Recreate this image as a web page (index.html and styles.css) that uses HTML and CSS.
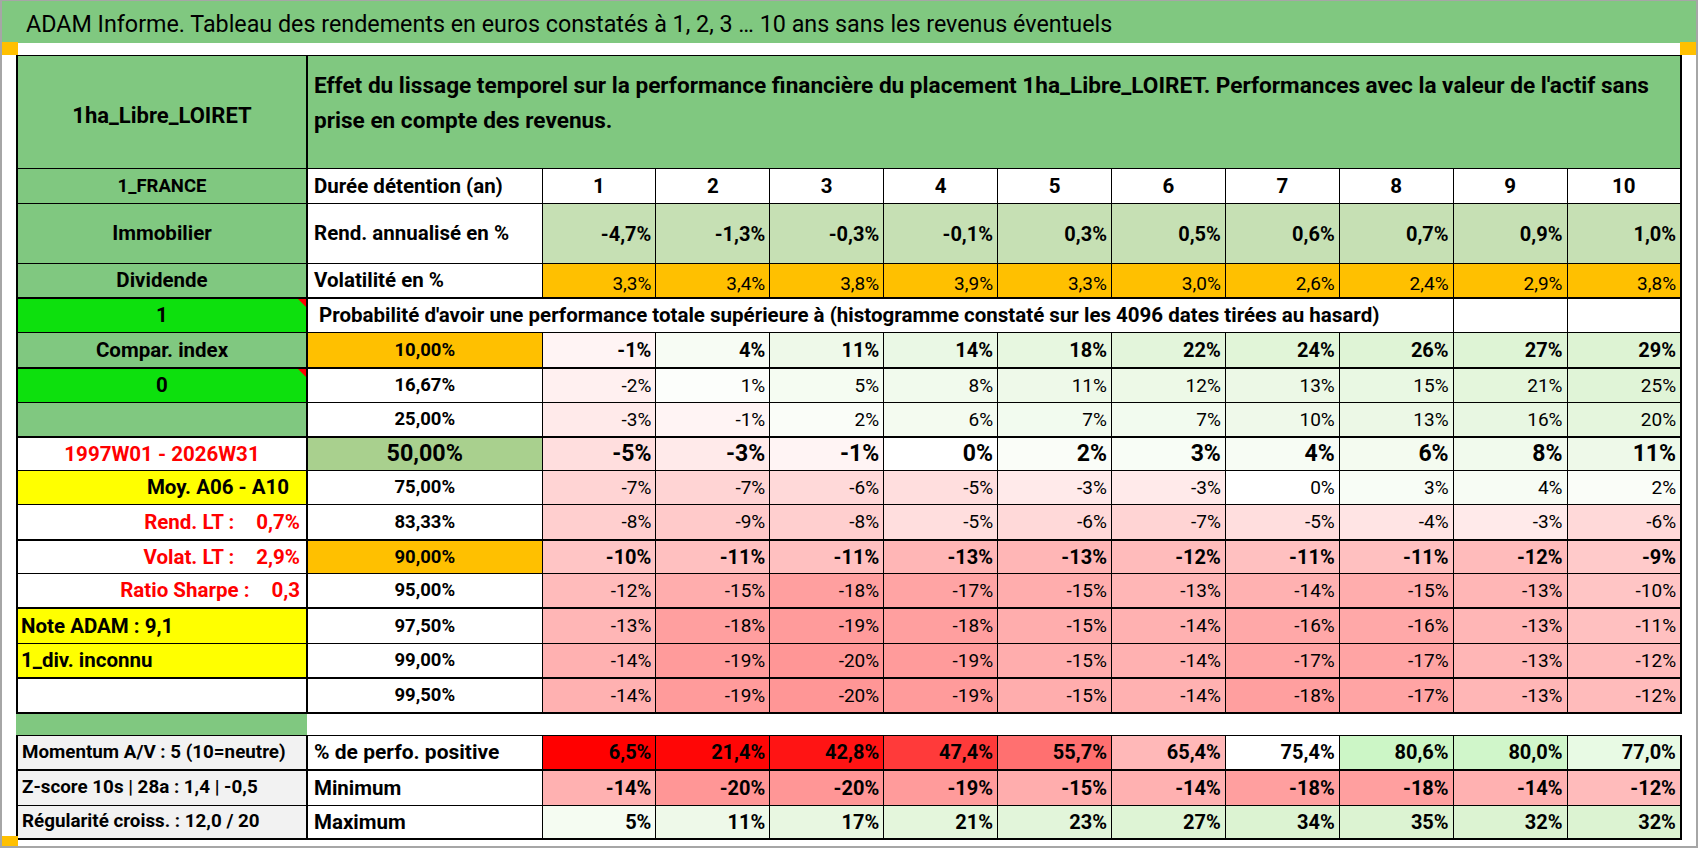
FILE: index.html
```html
<!DOCTYPE html>
<html lang="fr">
<head>
<meta charset="utf-8">
<title>ADAM Informe</title>
<link rel="stylesheet" href="styles.css">
</head>
<body>
<div class="page">
  <div class="titlebar">ADAM Informe. Tableau des rendements en euros constatés à 1, 2, 3 … 10 ans sans les revenus éventuels</div>
  <div class="sheet">
    <table class="grid">
      <colgroup><col class="ca"><col class="cb"><col class="cd"><col class="cd"><col class="cd"><col class="cd"><col class="cd"><col class="cd"><col class="cd"><col class="cd"><col class="cd"><col class="cd"></colgroup>
      <tr class="r-head">
        <td class="a g c name">1ha_Libre_LOIRET</td>
        <td class="g head" colspan="11">Effet du lissage temporel sur la performance financière du placement 1ha_Libre_LOIRET. Performances avec la valeur de l'actif sans<br>prise en compte des revenus.</td>
      </tr>
      <tr class="r-35">
        <td class="a g c small">1_FRANCE</td>
        <td class="b l">Durée détention (an)</td>
        <td class="c">1</td><td class="c">2</td><td class="c">3</td><td class="c">4</td><td class="c">5</td><td class="c">6</td><td class="c">7</td><td class="c">8</td><td class="c">9</td><td class="c">10</td>
      </tr>
      <tr class="r-60">
        <td class="a g c">Immobilier</td>
        <td class="b l">Rend. annualisé en %</td>
        <td class="lg v">-4,7%</td><td class="lg v">-1,3%</td><td class="lg v">-0,3%</td><td class="lg v">-0,1%</td><td class="lg v">0,3%</td><td class="lg v">0,5%</td><td class="lg v">0,6%</td><td class="lg v">0,7%</td><td class="lg v">0,9%</td><td class="lg v">1,0%</td>
      </tr>
      <tr class="r-34 thick">
        <td class="a g c">Dividende</td>
        <td class="b l">Volatilité en %</td>
        <td class="or v reg low">3,3%</td><td class="or v reg low">3,4%</td><td class="or v reg low">3,8%</td><td class="or v reg low">3,9%</td><td class="or v reg low">3,3%</td><td class="or v reg low">3,0%</td><td class="or v reg low">2,6%</td><td class="or v reg low">2,4%</td><td class="or v reg low">2,9%</td><td class="or v reg low">3,8%</td>
      </tr>
      <tr class="r-35">
        <td class="a lime c note">1</td>
        <td class="prob" colspan="9">Probabilité d'avoir une performance totale supérieure à (histogramme constaté sur les 4096 dates tirées au hasard)</td>
        <td></td><td></td>
      </tr>
      <tr class="r-35 thick">
        <td class="a g c">Compar. index</td>
        <td class="b c or pct">10,00%</td>
        <td class="v" style="background:#FFF4F4">-1%</td><td class="v" style="background:#F7FCF4">4%</td><td class="v" style="background:#EEF9E9">11%</td><td class="v" style="background:#EAF8E5">14%</td><td class="v" style="background:#E7F7E0">18%</td><td class="v" style="background:#E3F5DB">22%</td><td class="v" style="background:#E1F5D8">24%</td><td class="v" style="background:#DFF4D6">26%</td><td class="v" style="background:#DEF4D5">27%</td><td class="v" style="background:#DDF3D3">29%</td>
      </tr>
      <tr class="r-35">
        <td class="a lime c note">0</td>
        <td class="b c pct">16,67%</td>
        <td class="v reg" style="background:#FFF0F0">-2%</td><td class="v reg" style="background:#FCFEFB">1%</td><td class="v reg" style="background:#F5FCF2">5%</td><td class="v reg" style="background:#F1FAED">8%</td><td class="v reg" style="background:#EEF9E9">11%</td><td class="v reg" style="background:#EDF9E7">12%</td><td class="v reg" style="background:#ECF8E6">13%</td><td class="v reg" style="background:#E9F8E3">15%</td><td class="v reg" style="background:#E4F6DC">21%</td><td class="v reg" style="background:#E0F4D7">25%</td>
      </tr>
      <tr class="r-34 thick">
        <td class="a g"></td>
        <td class="b c pct">25,00%</td>
        <td class="v reg" style="background:#FFEAEA">-3%</td><td class="v reg" style="background:#FFF4F4">-1%</td><td class="v reg" style="background:#FAFDF8">2%</td><td class="v reg" style="background:#F4FBF0">6%</td><td class="v reg" style="background:#F2FBEF">7%</td><td class="v reg" style="background:#F2FBEF">7%</td><td class="v reg" style="background:#EFF9EA">10%</td><td class="v reg" style="background:#ECF8E6">13%</td><td class="v reg" style="background:#E8F7E2">16%</td><td class="v reg" style="background:#E5F6DD">20%</td>
      </tr>
      <tr class="r-34">
        <td class="a c red">1997W01 - 2026W31</td>
        <td class="b c mg bigp">50,00%</td>
        <td class="v big" style="background:#FFDEDE">-5%</td><td class="v big" style="background:#FFEAEA">-3%</td><td class="v big" style="background:#FFF4F4">-1%</td><td class="v big" style="background:#FFFFFF">0%</td><td class="v big" style="background:#FAFDF8">2%</td><td class="v big" style="background:#F8FDF6">3%</td><td class="v big" style="background:#F7FCF4">4%</td><td class="v big" style="background:#F4FBF0">6%</td><td class="v big" style="background:#F1FAED">8%</td><td class="v big" style="background:#EEF9E9">11%</td>
      </tr>
      <tr class="r-34">
        <td class="a y r moy">Moy. A06 - A10</td>
        <td class="b c pct">75,00%</td>
        <td class="v reg" style="background:#FFD4D4">-7%</td><td class="v reg" style="background:#FFD4D4">-7%</td><td class="v reg" style="background:#FFD9D9">-6%</td><td class="v reg" style="background:#FFDEDE">-5%</td><td class="v reg" style="background:#FFEAEA">-3%</td><td class="v reg" style="background:#FFEAEA">-3%</td><td class="v reg" style="background:#FFFFFF">0%</td><td class="v reg" style="background:#F8FDF6">3%</td><td class="v reg" style="background:#F7FCF4">4%</td><td class="v reg" style="background:#FAFDF8">2%</td>
      </tr>
      <tr class="r-35 thick">
        <td class="a red"><div class="kv"><span>Rend. LT :</span><span>0,7%</span></div></td>
        <td class="b c pct">83,33%</td>
        <td class="v reg" style="background:#FFCFCF">-8%</td><td class="v reg" style="background:#FFCACA">-9%</td><td class="v reg" style="background:#FFCFCF">-8%</td><td class="v reg" style="background:#FFDEDE">-5%</td><td class="v reg" style="background:#FFD9D9">-6%</td><td class="v reg" style="background:#FFD4D4">-7%</td><td class="v reg" style="background:#FFDEDE">-5%</td><td class="v reg" style="background:#FFE4E4">-4%</td><td class="v reg" style="background:#FFEAEA">-3%</td><td class="v reg" style="background:#FFD9D9">-6%</td>
      </tr>
      <tr class="r-34">
        <td class="a red"><div class="kv"><span>Volat. LT :</span><span>2,9%</span></div></td>
        <td class="b c or pct">90,00%</td>
        <td class="v" style="background:#FFC5C5">-10%</td><td class="v" style="background:#FFC0C0">-11%</td><td class="v" style="background:#FFC0C0">-11%</td><td class="v" style="background:#FFB6B6">-13%</td><td class="v" style="background:#FFB6B6">-13%</td><td class="v" style="background:#FFBBBB">-12%</td><td class="v" style="background:#FFC0C0">-11%</td><td class="v" style="background:#FFC0C0">-11%</td><td class="v" style="background:#FFBBBB">-12%</td><td class="v" style="background:#FFCACA">-9%</td>
      </tr>
      <tr class="r-34 thick">
        <td class="a red"><div class="kv"><span>Ratio Sharpe :</span><span>0,3</span></div></td>
        <td class="b c pct">95,00%</td>
        <td class="v reg" style="background:#FFBBBB">-12%</td><td class="v reg" style="background:#FFADAD">-15%</td><td class="v reg" style="background:#FF9F9F">-18%</td><td class="v reg" style="background:#FFA4A4">-17%</td><td class="v reg" style="background:#FFADAD">-15%</td><td class="v reg" style="background:#FFB6B6">-13%</td><td class="v reg" style="background:#FFB1B1">-14%</td><td class="v reg" style="background:#FFADAD">-15%</td><td class="v reg" style="background:#FFB6B6">-13%</td><td class="v reg" style="background:#FFC5C5">-10%</td>
      </tr>
      <tr class="r-36">
        <td class="a y l">Note ADAM : 9,1</td>
        <td class="b c pct">97,50%</td>
        <td class="v reg" style="background:#FFB6B6">-13%</td><td class="v reg" style="background:#FF9F9F">-18%</td><td class="v reg" style="background:#FF9B9B">-19%</td><td class="v reg" style="background:#FF9F9F">-18%</td><td class="v reg" style="background:#FFADAD">-15%</td><td class="v reg" style="background:#FFB1B1">-14%</td><td class="v reg" style="background:#FFA8A8">-16%</td><td class="v reg" style="background:#FFA8A8">-16%</td><td class="v reg" style="background:#FFB6B6">-13%</td><td class="v reg" style="background:#FFC0C0">-11%</td>
      </tr>
      <tr class="r-34 thick">
        <td class="a y l">1_div. inconnu</td>
        <td class="b c pct">99,00%</td>
        <td class="v reg" style="background:#FFB1B1">-14%</td><td class="v reg" style="background:#FF9B9B">-19%</td><td class="v reg" style="background:#FF9696">-20%</td><td class="v reg" style="background:#FF9B9B">-19%</td><td class="v reg" style="background:#FFADAD">-15%</td><td class="v reg" style="background:#FFB1B1">-14%</td><td class="v reg" style="background:#FFA4A4">-17%</td><td class="v reg" style="background:#FFA4A4">-17%</td><td class="v reg" style="background:#FFB6B6">-13%</td><td class="v reg" style="background:#FFBBBB">-12%</td>
      </tr>
      <tr class="r-35 thick">
        <td class="a"></td>
        <td class="b c pct">99,50%</td>
        <td class="v reg" style="background:#FFB1B1">-14%</td><td class="v reg" style="background:#FF9B9B">-19%</td><td class="v reg" style="background:#FF9696">-20%</td><td class="v reg" style="background:#FF9B9B">-19%</td><td class="v reg" style="background:#FFADAD">-15%</td><td class="v reg" style="background:#FFB1B1">-14%</td><td class="v reg" style="background:#FF9F9F">-18%</td><td class="v reg" style="background:#FFA4A4">-17%</td><td class="v reg" style="background:#FFB6B6">-13%</td><td class="v reg" style="background:#FFBBBB">-12%</td>
      </tr>
    </table>
    <div class="gap"><div class="gap-cell"></div></div>
    <table class="grid">
      <colgroup><col class="ca"><col class="cb"><col class="cd"><col class="cd"><col class="cd"><col class="cd"><col class="cd"><col class="cd"><col class="cd"><col class="cd"><col class="cd"><col class="cd"></colgroup>
      <tr class="r-35 thick">
        <td class="a gray l info">Momentum A/V : 5 (10=neutre)</td>
        <td class="b l perf">% de perfo. positive</td>
        <td class="v" style="background:#FF0000">6,5%</td><td class="v" style="background:#FF0606">21,4%</td><td class="v" style="background:#FF1414">42,8%</td><td class="v" style="background:#FF3A3A">47,4%</td><td class="v" style="background:#FF7070">55,7%</td><td class="v" style="background:#FFB8B8">65,4%</td><td class="v" style="background:#FFFFFF">75,4%</td><td class="v" style="background:#CCF6C6">80,6%</td><td class="v" style="background:#D0F6CA">80,0%</td><td class="v" style="background:#E8FAE4">77,0%</td>
      </tr>
      <tr class="r-35">
        <td class="a gray l info">Z-score 10s | 28a : 1,4 | -0,5</td>
        <td class="b l">Minimum</td>
        <td class="v" style="background:#FFB1B1">-14%</td><td class="v" style="background:#FF9696">-20%</td><td class="v" style="background:#FF9696">-20%</td><td class="v" style="background:#FF9B9B">-19%</td><td class="v" style="background:#FFADAD">-15%</td><td class="v" style="background:#FFB1B1">-14%</td><td class="v" style="background:#FF9F9F">-18%</td><td class="v" style="background:#FF9F9F">-18%</td><td class="v" style="background:#FFB1B1">-14%</td><td class="v" style="background:#FFBBBB">-12%</td>
      </tr>
      <tr class="r-34 thick">
        <td class="a gray l info">Régularité croiss. : 12,0 / 20</td>
        <td class="b l">Maximum</td>
        <td class="v" style="background:#F5FCF2">5%</td><td class="v" style="background:#EEF9E9">11%</td><td class="v" style="background:#E8F7E1">17%</td><td class="v" style="background:#E4F6DC">21%</td><td class="v" style="background:#E2F5DA">23%</td><td class="v" style="background:#DEF4D5">27%</td><td class="v" style="background:#DCF3D2">34%</td><td class="v" style="background:#DCF3D2">35%</td><td class="v" style="background:#DCF3D2">32%</td><td class="v" style="background:#DCF3D2">32%</td>
      </tr>
    </table>
  </div>
  <span class="handle h-tl"></span>
  <span class="handle h-tr"></span>
  <span class="handle h-bl"></span>
</div>
</body>
</html>
```

FILE: styles.css
```css
html, body {
  margin: 0;
  padding: 0;
  background: #ffffff;
}

body {
  font-family: Roboto, "Liberation Sans", sans-serif;
  color: #000;
}

.page {
  position: relative;
  width: 1698px;
  height: 848px;
  box-sizing: border-box;
  border: 2px solid #a6a6a6;
  border-top-width: 1px;
  background: #fff;
  overflow: hidden;
}

.titlebar {
  height: 42px;
  background: #80c880;
  padding-left: 24px;
  font-size: 23.3px;
  line-height: 46px;
  white-space: nowrap;
}

.sheet {
  padding: 12px 0 0 14px;
}

.grid {
  table-layout: fixed;
  border-collapse: collapse;
  width: 1664px;
  font-weight: bold;
  font-size: 20.5px;
}

.grid col.ca { width: 290px; }
.grid col.cb { width: 235px; }
.grid col.cd { width: 113.9px; }

.grid td {
  box-sizing: border-box;
  border: 1px solid #000;
  padding: 0 4px;
  white-space: nowrap;
  overflow: hidden;
  vertical-align: middle;
  line-height: 1;
}

.grid td.a {
  border-left: 2px solid #000;
  border-right: 2px solid #000;
}
.grid td:last-child {
  border-right: 2px solid #000;
}

.grid tr.thick td {
  border-bottom: 2px solid #000;
}

.r-head td { height: 113px; }
.r-60 td { height: 60px; }
.r-36 td { height: 36px; }
.r-35 td { height: 35px; }
.r-34 td { height: 34px; }

/* alignment */
.c { text-align: center; }
.l { text-align: left; }
.r { text-align: right; }
.v { text-align: right; font-size: 20px; }

/* fills */
.g { background: #80c880; }
.lime { background: #0de00d; }
.y { background: #ffff00; }
.gray { background: #f2f2f2; }
.or { background: #ffc000; }
.lg { background: #c6e0b4; }
.mg { background: #a9d08e; }

.red { color: #ff0000; }
.grid td.reg { font-weight: normal; font-size: 19px; }
.grid td.low { vertical-align: bottom; padding-bottom: 4px; }

.grid td.name {
  font-size: 22px;
  padding-top: 8px;
}

.grid td.head {
  vertical-align: top;
  text-align: left;
  font-size: 22.6px;
  line-height: 35px;
  padding: 12px 4px 0 6px;
  white-space: nowrap;
}

.grid td.small { font-size: 18.5px; }
.grid td.pct { font-size: 18.5px; }
.grid td.bigp { font-size: 23.3px; }
.grid td.big { font-size: 23px; }
.grid td.info { font-size: 18.8px; padding-left: 4px; }
.grid td.perf { font-size: 21px; }

.grid td.b.l { padding-left: 6px; }
.grid td.y.l { padding-left: 3px; }
.grid td.moy { padding-right: 17px; }

.grid td.prob {
  text-align: left;
  padding-left: 11px;
}

.kv {
  display: flex;
  justify-content: flex-end;
  gap: 22px;
  padding-right: 2px;
}

.note {
  position: relative;
}
.note::after {
  content: "";
  position: absolute;
  top: 0;
  right: 0;
  border-left: 8px solid transparent;
  border-top: 8px solid #ff0000;
}

.gap {
  height: 21px;
}
.gap-cell {
  width: 291px;
  height: 100%;
  background: #80c880;
}

.handle {
  position: absolute;
  background: #ffc000;
}
.h-tl { left: -2px; top: 41px; width: 18px; height: 13px; }
.h-tr { left: 1678px; top: 41px; width: 16px; height: 13px; }
.h-bl { left: -2px; top: 835px; width: 18px; height: 12px; }
```
